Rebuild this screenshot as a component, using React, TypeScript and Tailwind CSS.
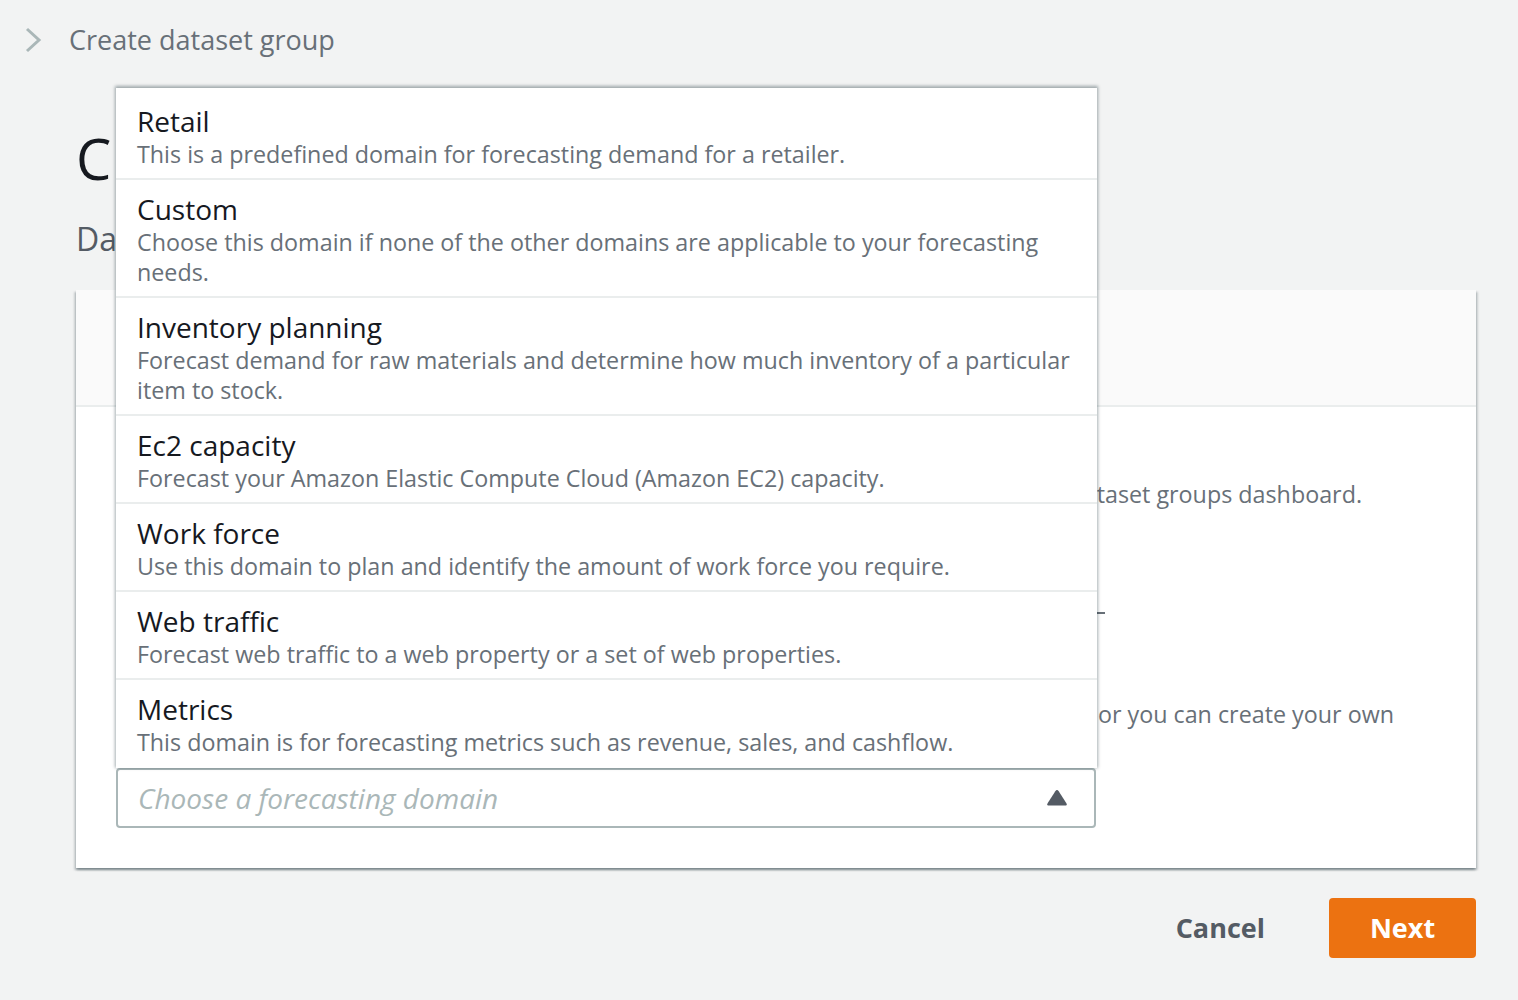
import React from 'react';

interface DomainOption {
  title: string;
  description: string;
}

const domains: DomainOption[] = [
  { title: 'Retail', description: 'This is a predefined domain for forecasting demand for a retailer.' },
  {
    title: 'Custom',
    description: 'Choose this domain if none of the other domains are applicable to your forecasting needs.',
  },
  {
    title: 'Inventory planning',
    description:
      'Forecast demand for raw materials and determine how much inventory of a particular item to stock.',
  },
  { title: 'Ec2 capacity', description: 'Forecast your Amazon Elastic Compute Cloud (Amazon EC2) capacity.' },
  { title: 'Work force', description: 'Use this domain to plan and identify the amount of work force you require.' },
  { title: 'Web traffic', description: 'Forecast web traffic to a web property or a set of web properties.' },
  { title: 'Metrics', description: 'This domain is for forecasting metrics such as revenue, sales, and cashflow.' },
];

const DomainMenu = (): JSX.Element => {
  return (
    <ul className="absolute bottom-full left-0 right-[-1px] bg-white pt-[4px] shadow-[0_-1px_3px_1px_rgba(0,28,36,0.35)]">
      {domains.map((d, i) => (
        <li
          key={d.title}
          className={
            i === domains.length - 1
              ? 'px-[21px] pt-[11px] pb-[11px]'
              : 'border-b-2 border-[#eaeded] px-[21px] pt-[11px] pb-[9px]'
          }
        >
          <p className="text-[28px] leading-[36px] text-[#16191f]">{d.title}</p>
          <p className="text-[23.3px] leading-[30px] text-[#687078]">{d.description}</p>
        </li>
      ))}
    </ul>
  );
};

export default function App(): JSX.Element {
  return (
    <div className="min-h-screen bg-[#f2f3f3] font-['Open_Sans',sans-serif]">
      <nav className="flex h-[80px] items-center pl-[24px]">
        <svg width="18" height="26" viewBox="0 0 18 26" fill="none">
          <polyline points="3,2 15,13 3,24" stroke="#aab7b8" strokeWidth="3" />
        </svg>
        <span className="ml-[27px] text-[27px] text-[#687078]">Create dataset group</span>
      </nav>

      <div className="w-[1476px] pl-[76px]">
        <h1 className="mt-[46px] text-[56px] leading-[64px] text-[#16191f]">Create dataset group</h1>
        <p className="mt-[29px] text-[32px] leading-[40px] text-[#545b64]">Dataset details</p>

        <section className="mt-[31px] bg-white shadow-[0_2px_2px_0_rgba(0,28,36,0.3),2px_2px_2px_0_rgba(0,28,36,0.15),-2px_2px_2px_0_rgba(0,28,36,0.15)]">
          <div className="flex h-[117px] items-center border-b-2 border-[#eaeded] bg-[#fafafa] px-[40px]">
            <h2 className="text-[30px] font-bold text-[#16191f]">Dataset group details</h2>
          </div>
          <div className="flex flex-col px-[40px] pt-[30px] pb-[40px]">
            <label className="text-[28px] leading-[34px] text-[#16191f]">Dataset group name</label>
            <p className="mt-[8px] w-[1246px] whitespace-nowrap text-right text-[23.3px] leading-[30px] text-[#687078]">
              You can find this name later on the dataset groups dashboard.
            </p>
            <div className="mt-[10px] h-[60px] w-[980px] rounded-[4px] border-2 border-[#aab7b8]" />
            <div className="ml-[981px] mt-[33px] h-[2px] w-[8px] bg-[#687078]" />
            <label className="mt-[51px] text-[28px] leading-[34px] text-[#16191f]">Forecasting domain</label>
            <p className="text-[23.3px] leading-[30px] text-[#687078]">
              <span className="block w-[1278px] whitespace-nowrap text-right">
                Choose a predefined domain that best describes your data or you can create your own
              </span>
              <span className="block">custom domain.</span>
            </p>
            <div className="relative mt-[9px] w-[980px]">
              <DomainMenu />
              <div className="flex h-[60px] items-center justify-between rounded-[4px] border-2 border-[#aab7b8] bg-white pl-[20px] pr-[26px]">
                <span className="text-[28px] italic text-[#aab7b8]">Choose a forecasting domain</span>
                <svg width="22" height="18" viewBox="0 0 22 18">
                  <path
                    d="M9.3 2.2 Q11 -0.2 12.7 2.2 L20.4 14.2 Q21.6 16.6 18.8 16.6 L3.2 16.6 Q0.4 16.6 1.6 14.2 Z"
                    fill="#545b64"
                  />
                </svg>
              </div>
            </div>
          </div>
        </section>

        <div className="mt-[30px] flex items-center justify-end">
          <button className="mr-[44px] px-[20px] text-[27px] font-bold text-[#545b64]">Cancel</button>
          <button className="h-[60px] w-[147px] rounded-[4px] bg-[#ec7211] text-[27px] font-bold text-white">
            Next
          </button>
        </div>
      </div>
    </div>
  );
}
